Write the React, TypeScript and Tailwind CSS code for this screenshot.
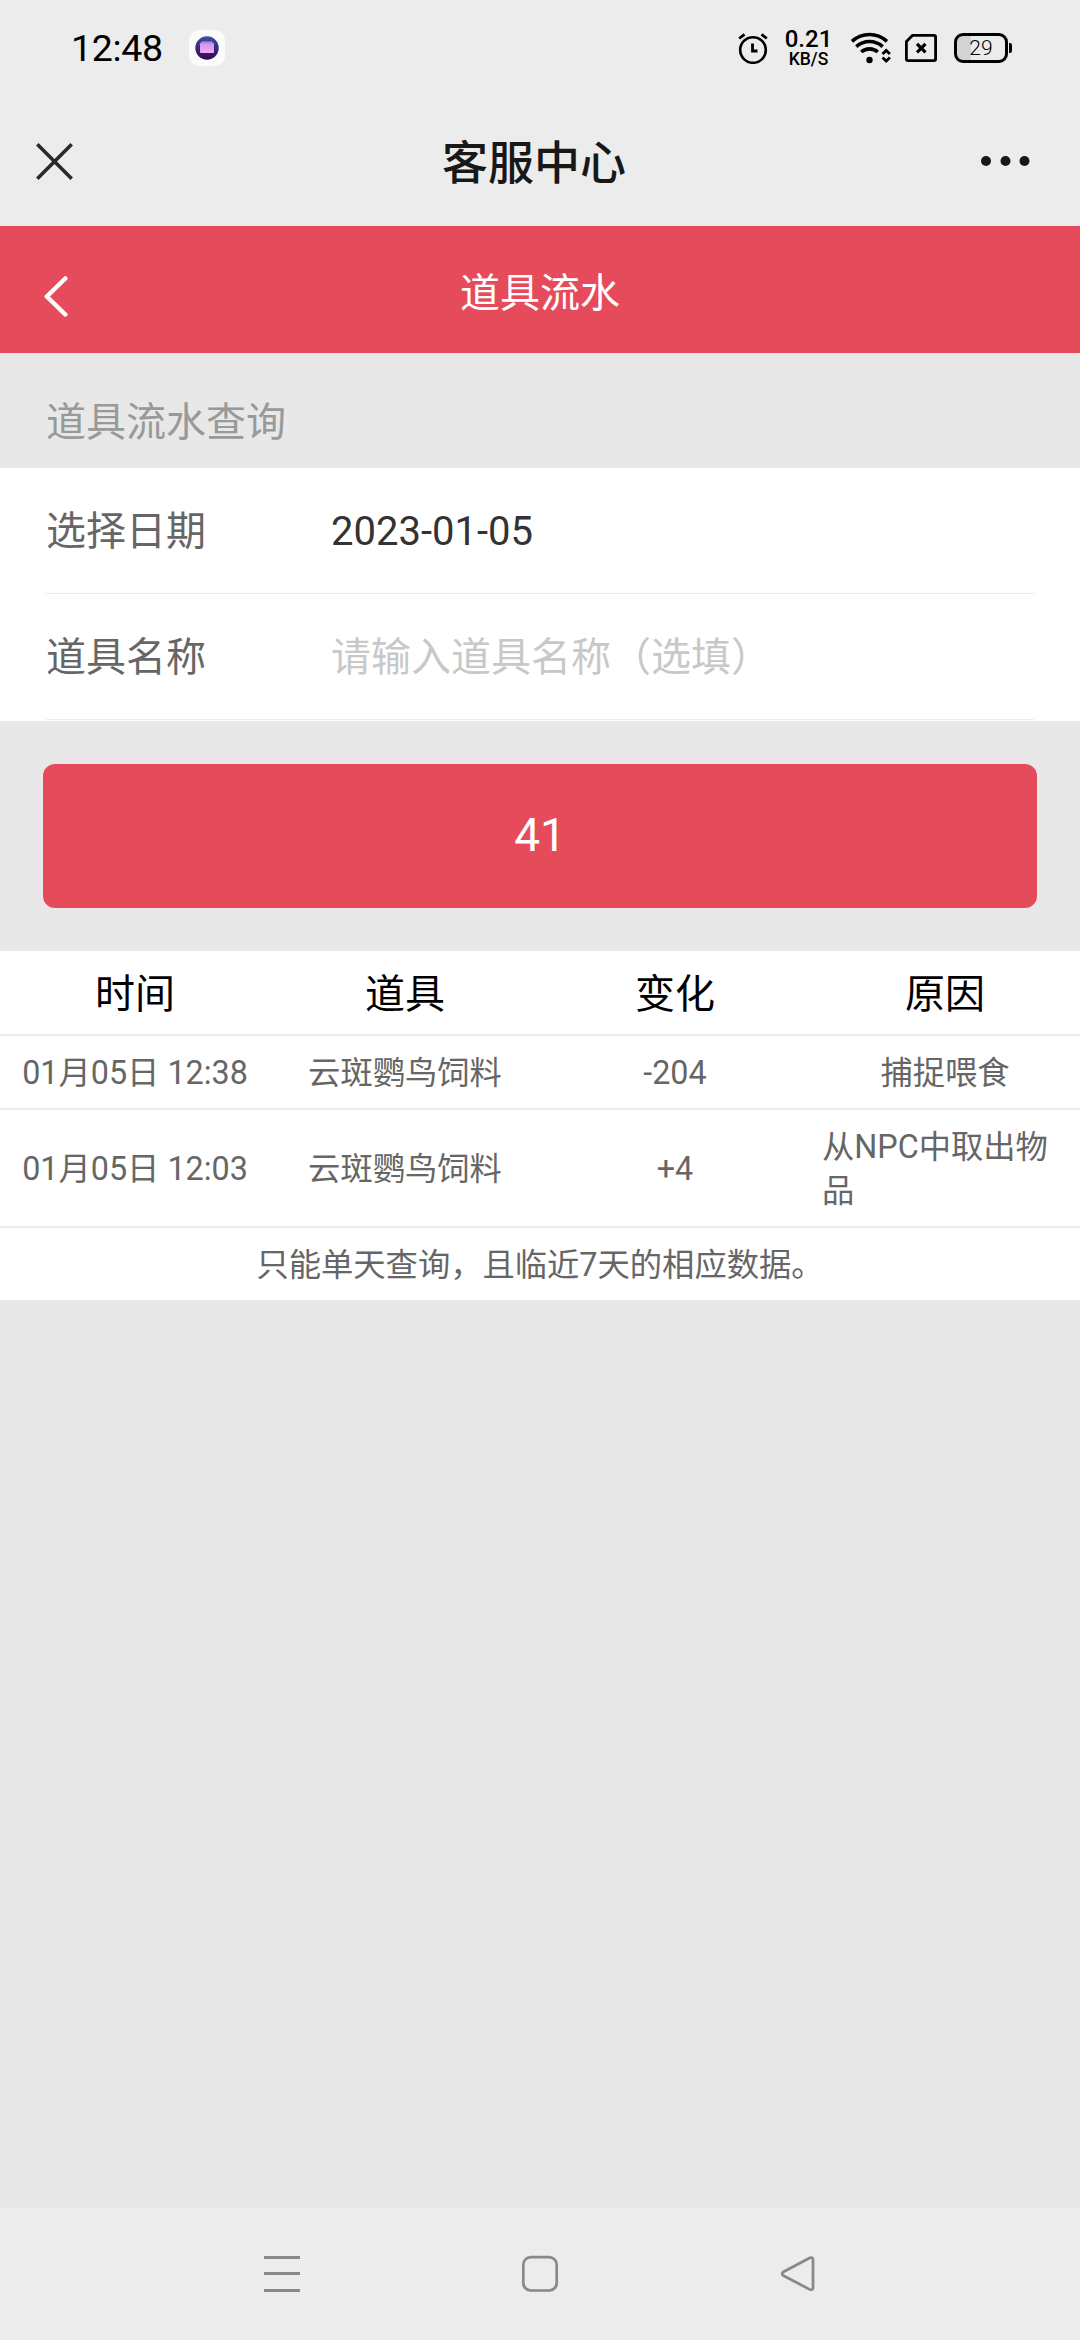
import clsx from "clsx";

const records = [
  { time: "01月05日 12:38", item: "云斑鹦鸟饲料", change: "-204", reason: "捕捉喂食" },
  { time: "01月05日 12:03", item: "云斑鹦鸟饲料", change: "+4", reason: "从NPC中取出物品" },
];

const StatusBar = () => {
  return (
    <div className="flex h-24 items-center justify-between pl-[71px] pr-[68px] text-black">
      <div className="flex items-center">
        <span className="w-[118px] pt-0.5 text-[37.5px] leading-none tracking-[-0.3px]">12:48</span>
        {/* App notification */}
        <svg width="36" height="36" viewBox="0 0 36 36">
          <defs>
            <linearGradient id="ring" x1="0" y1="0" x2="0" y2="1">
              <stop offset="0" stopColor="#3b4fa0" />
              <stop offset="0.5" stopColor="#3a2a80" />
              <stop offset="1" stopColor="#2c0a4e" />
            </linearGradient>
            <linearGradient id="folder" x1="0" y1="0" x2="0" y2="1">
              <stop offset="0" stopColor="#8f7fd8" />
              <stop offset="0.3" stopColor="#d49aec" />
              <stop offset="1" stopColor="#f6a6ee" />
            </linearGradient>
          </defs>
          <rect width="36" height="36" rx="10" fill="#fbfbfb" />
          <circle cx="18" cy="18" r="11.7" fill="url(#ring)" />
          <path d="M11 13.5l2-2.3h9.5l2.5 2.3V22a1 1 0 0 1-1 1H12a1 1 0 0 1-1-1z" fill="url(#folder)" />
        </svg>
      </div>

      <div className="flex items-center">
        {/* Alarm */}
        <svg className="mr-px" width="30" height="32" viewBox="0 0 30 32" fill="none" stroke="#000">
          <circle cx="15" cy="18" r="12.8" strokeWidth="2.6" />
          <path d="M14.5 11.5v7.5h5" strokeWidth="2.8" />
          <path d="M1.2 6.5l5.3-4.2M28.8 6.5l-5.3-4.2" strokeWidth="2.8" />
        </svg>
        <div className="ml-[15px] flex w-[49px] flex-col items-center font-medium">
          <span className="text-[24px] leading-[21px]">0.21</span>
          <span className="text-[17.5px] leading-[18px]">KB/S</span>
        </div>
        {/* Wifi */}
        <svg className="ml-[18px]" width="40" height="32" viewBox="0 0 40 32" fill="none" stroke="#000">
          <path d="M1 9.3C11.5 0.3 25.5 0.3 36 9.3" strokeWidth="3.6" />
          <path d="M5.3 14.6C13 7.8 24 7.8 31.7 14.6" strokeWidth="3.6" />
          <path d="M10.2 20C15 15.8 22 15.8 26.8 20" strokeWidth="3.6" />
          <circle cx="18.5" cy="28" r="3.2" fill="#000" stroke="none" />
          <path d="M31.5 22l3.7-3.5 3.7 3.5M31.5 25.5l3.7 3.500 3.7-3.5" strokeWidth="2.8" />
        </svg>
        {/* SIM card */}
        <svg className="ml-[14px]" width="32" height="28" viewBox="0 0 32 28" fill="none" stroke="#000">
          <path d="M7.5 1.4H29a1.6 1.6 0 0 1 1.6 1.6v22a1.6 1.6 0 0 1-1.6 1.6H3A1.6 1.6 0 0 1 1.4 25V7.5z" strokeWidth="2.8" />
          <path d="M12 9.8l8.5 8.5M20.5 9.8L12 18.3" strokeWidth="3.2" />
        </svg>
        {/* Battery */}
        <div className="ml-[17px] flex items-center">
          <div className="flex h-[30px] w-[54px] items-center justify-center rounded-[9px] border-3 border-black bg-linear-to-r from-[#d4d4d4] from-29% to-transparent to-29% text-[21px] font-light leading-none">
            29
          </div>
          <div className="ml-px h-[10px] w-[3px] rounded-r-xs bg-black" />
        </div>
      </div>
    </div>
  );
};

const TitleBar = () => {
  return (
    <div className="flex h-[130px] items-center pl-9 pr-[50px] text-[#181818]">
      <svg width="37" height="37" viewBox="0 0 37 37" stroke="#2a2a2a" strokeWidth="3.6">
        <path d="M1.3 1.3l34.4 34.4M35.7 1.3L1.3 35.7" />
      </svg>
      <h1 className="flex-1 pl-3.5 pt-1 text-center text-[46px] font-medium leading-[60px]">客服中心</h1>
      <svg width="49" height="10" viewBox="0 0 49 10" fill="#181818">
        <circle cx="5" cy="5" r="5" />
        <circle cx="24.5" cy="5" r="5" />
        <circle cx="43.5" cy="5" r="5" />
      </svg>
    </div>
  );
};

const FormRow = ({ label, value, placeholder }: { label: string; value?: string; placeholder?: string }) => {
  return (
    <div className="flex h-[126px] items-center border-b border-[#ececec] pt-[3px]">
      <div className="w-[285px] text-[#666]">{label}</div>
      <div className={clsx(value ? "pb-px text-[#333]" : "text-[#c8c8c8]")}>{value || placeholder}</div>
    </div>
  );
};

const App = () => {
  return (
    <div className="flex h-[2340px] w-[1080px] flex-col bg-[#e8e8e8] font-['Roboto','Noto_Sans_CJK_SC',sans-serif]">
      <header className="bg-[#ececec]">
        <StatusBar />
        <TitleBar />
      </header>

      <div className="grid h-[127px] grid-cols-[1fr_auto_1fr] items-center bg-[#e64b5b] px-11 text-white">
        <svg className="mt-[14px]" width="24" height="41" viewBox="0 0 24 41" fill="none" stroke="#fff" strokeWidth="4.5" strokeLinecap="round" strokeLinejoin="round">
          <path d="M21.3 2.5L2.8 20.5l18.5 18" />
        </svg>
        <h2 className="pt-2 text-[40px] leading-[60px]">道具流水</h2>
      </div>

      <main className="flex-1">
        <div className="flex h-[115px] items-end px-[46px] pb-[15px] text-[40px] leading-[60px] text-[#999]">道具流水查询</div>

        <div className="bg-white px-[46px] pb-px text-[40px] leading-[60px]">
          <FormRow label="选择日期" value="2023-01-05" />
          <FormRow label="道具名称" placeholder="请输入道具名称（选填）" />
        </div>

        <div className="p-[43px]">
          <button className="flex h-[144px] w-full items-center justify-center rounded-xl bg-[#e64b5b] pb-[3px] text-[46px] leading-none text-white">
            41
          </button>
        </div>

        {/* Records */}
        <div className="bg-white text-[32.3px] leading-[44px] text-[#666]">
          <div className="grid h-[85px] grid-cols-4 items-center border-b-2 border-[#ebebeb] pt-[5px] text-center text-[40px] text-black">
            <div>时间</div>
            <div>道具</div>
            <div>变化</div>
            <div>原因</div>
          </div>
          {records.map((record) => (
            <div key={record.time} className="grid grid-cols-4 items-center border-b-2 border-[#ebebeb] pb-[13px] pt-[15px]">
              <div className="text-center">{record.time}</div>
              <div className="text-center">{record.item}</div>
              <div className="text-center">{record.change}</div>
              <div className="flex justify-center px-3">
                <span>{record.reason}</span>
              </div>
            </div>
          ))}
          <div className="pb-[13px] pt-[15px] text-center">只能单天查询，且临近7天的相应数据。</div>
        </div>
      </main>

      {/* System navigation */}
      <nav className="flex h-[132px] items-center justify-between bg-[#ececec] px-[263px]">
        <svg width="38" height="38" viewBox="0 0 38 38" stroke="#888" strokeWidth="3">
          <path d="M1 2.5h36M1 18.5h36M1 35.5h36" />
        </svg>
        <svg width="38" height="38" viewBox="0 0 38 38" fill="none" stroke="#888" strokeWidth="2.7">
          <rect x="2.3" y="2.2" width="33.4" height="33.3" rx="7.5" />
        </svg>
        <svg width="38" height="38" viewBox="0 0 38 38" fill="none" stroke="#888" strokeWidth="2.7" strokeLinejoin="round">
          <path d="M31 2.8L4.2 17a2 2 0 0 0 0 3.5L31 34.6a2 2 0 0 0 3-1.7V4.5a2 2 0 0 0-3-1.7z" />
        </svg>
      </nav>
    </div>
  );
};

export default App;
